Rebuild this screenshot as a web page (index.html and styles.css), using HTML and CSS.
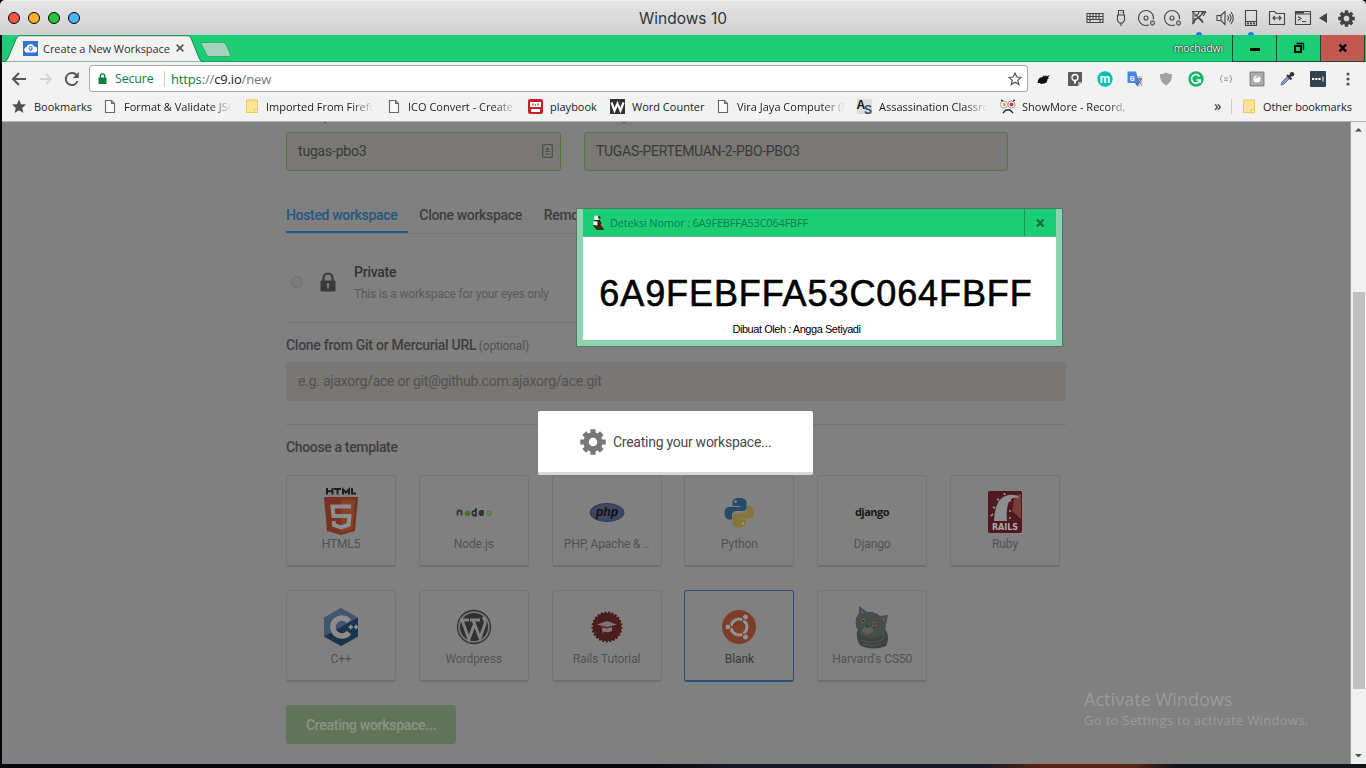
FILE: index.html
```html
<!DOCTYPE html>
<html lang="en">
<head>
<meta charset="utf-8">
<title>Windows 10</title>
<link rel="stylesheet" href="styles.css">
</head>
<body>
<header class="mac">
  <div class="lights"><i class="red"></i><i class="amber"></i><i class="green"></i><i class="blue"></i></div>
  <div class="mac-title">Windows 10</div>
  <div class="mac-icons">
    <svg viewBox="0 0 20 20"><path d="M2 5.500h16v9H2zM2 8.500h16M2 11.500h16M5 5.500v6M8 5.500v6M11 5.500v6M14 5.500v6M5 12v2.500M15 12v2.500"/></svg>
    <svg viewBox="0 0 20 20"><path d="M7.500 7V2.500h5V7M6.500 7h7v5.500l-2 2.500h-3l-2-2.500zM10 15v3M9 4.500h.5M11 4.500h.5"/></svg>
    <svg viewBox="0 0 20 20"><circle cx="9" cy="10" r="7.500"/><circle cx="9" cy="10" r="2"/><circle cx="15.500" cy="15" r="3.200" class="badge"/><path class="wx" d="M14.200 13.700l2.600 2.600m0-2.600l-2.600 2.600"/></svg>
    <svg viewBox="0 0 20 20"><circle cx="9" cy="10" r="7.500"/><circle cx="9" cy="10" r="2"/><circle cx="15.500" cy="15" r="3.200" class="badge"/><path class="wx" d="M14.200 13.700l2.600 2.600m0-2.600l-2.600 2.600"/></svg>
    <svg viewBox="0 0 20 20"><path d="M3 3.500l14 0M4 3v13M4 4l10 11M4 14L16 3.500M5 8q4 0 5-4M4.500 11q7 0 9-7M9 10q3 0 5 4M3 16l3-2M17 4l-3 4"/></svg>
    <svg viewBox="0 0 20 20"><path d="M2 7.500h4l4-4v13l-4-4H2zM6 7.500v5M12.500 7.500q2 2.500 0 5M14.500 6q3 4 0 8M16 4q4.500 6 0 12"/></svg>
    <svg viewBox="0 0 20 20"><path d="M4.500 2.500h11v15h-11z"/><path d="M4.500 13.500h11"/><path d="M6 15.500h8" stroke-width="2" stroke-dasharray="2 1"/></svg>
    <svg viewBox="0 0 20 20"><path d="M2.500 3.500h5l2 2h8v11h-15zM6 10h8M8 8l-2 2 2 2M12 8l2 2-2 2"/></svg>
    <svg viewBox="0 0 20 20"><path d="M2.500 3.500h15v13h-15zM3 6h14M5 8.500l3 2-3 2M9 13.500h4"/><path d="M3 4.500h8" stroke-width="2"/></svg>
    <svg class="tri" viewBox="0 0 16 20"><path class="f" d="M12 5v10L4 10z"/></svg>
    <svg class="gear-s" viewBox="0 0 26 26"><use href="#gear"/></svg>
  </div>
  <b class="dot d1"></b><b class="dot d2"></b>
</header>

<svg width="0" height="0" class="defs"><defs>
  <g id="gear"><circle cx="13" cy="13" r="7" fill="none" stroke="currentColor" stroke-width="5.400"/><path d="M13 .3v5M13 20.700v5M.3 13h5M20.700 13h5M4.200 4.200l3.600 3.600M18.200 18.200l3.600 3.600M21.800 4.200l-3.600 3.600M7.800 18.200l-3.600 3.600" fill="none" stroke="currentColor" stroke-width="5.200"/></g>
  <g id="doc"><path d="M1.500 1.500h6l3 3v9h-9zM7.500 1.500v3h3" fill="#f8f8f8" stroke="#666" stroke-width="1.100"/></g>
  <g id="folder"><path d="M.5 1h11v10.500h-3V13.500h-8z" fill="#ffe391" stroke="#e9c85e"/><path d="M8.500 13.500v-3h3v3z" fill="#fff0b8" stroke="#e9c85e"/></g>
</defs></svg>

<main class="win">
  <div class="tabstrip">
    <svg class="tab-shape" viewBox="0 0 240 27"><path d="M0 27C4 27 6 25.500 7 23L15.500 3Q16.500.7 19 .7H187Q189 .7 190 3L198.500 24Q199.500 27 203 27z" fill="#f2f2f2" stroke="#0b8a4a" stroke-width="1"/><path d="M201 7.500h21q2 0 3 2l4.500 10q.7 2-2 2h-19q-2 0-3-2l-5-10q-.7-2 .5-2z" fill="#a5d0b9" stroke="#2ba266" stroke-width=".8"/></svg>
    <div class="tab">
      <svg width="15" height="15" viewBox="0 0 15 15"><path fill="#2f74d0" d="M0 0h15v15H0z"/><path d="M3.500 11.500a2.800 2.800 0 010-5.500A4 4 0 0111 5.500a3 3 0 01.5 6z" fill="#fff"/><circle cx="7.600" cy="7" r="1.500" fill="none" stroke="#2f8cdb" stroke-width="1.100"/><path d="M9 7q0 2.500-2.500 3" fill="none" stroke="#2f8cdb" stroke-width="1.100"/></svg>
      <span class="tab-name">Create a New Workspace</span>
      <svg class="tab-x" width="8" height="8" viewBox="0 0 8 8"><path d="M.7.7l6.600 6.600M7.300.7L.7 7.300" stroke="#555" stroke-width="1.700"/></svg>
    </div>
    <div class="user">mochadwi</div>
    <div class="wbtn"><svg width="14" height="14" viewBox="0 0 14 14"><path d="M2 8.500h10" stroke="#000" stroke-width="3"/></svg></div>
    <div class="wbtn"><svg width="14" height="14" viewBox="0 0 14 14"><path d="M3 5h6v6H3z" stroke="#000" stroke-width="2" fill="none"/><path d="M4.500 2.500H11.500V9" stroke="#000" fill="none" stroke-width="1.300"/></svg></div>
    <div class="wbtn close"><svg width="14" height="14" viewBox="0 0 14 14"><path d="M3.500 3.500l6.500 7M10 3.500L3.500 10.500" stroke="#000" stroke-width="2.500"/></svg></div>
  </div>

  <div class="toolbar">
    <svg width="16" height="16" viewBox="0 0 16 16"><path d="M15 8H3M8 2L2 8l6 6" fill="none" stroke="#555" stroke-width="2"/></svg>
    <svg width="16" height="16" viewBox="0 0 16 16"><path d="M2 8h11M8 3l5 5-5 5" fill="none" stroke="#d4d4d4" stroke-width="1.800"/></svg>
    <svg width="16" height="16" viewBox="0 0 16 16"><path d="M13.500 10A6 6 0 118 2a6 6 0 014.500 2" fill="none" stroke="#555" stroke-width="2"/><path d="M14.800 1v6h-6z" fill="#555"/></svg>
    <div class="omni">
      <svg width="9" height="12" viewBox="0 0 9 12"><path fill="#0b8043" d="M.5 4.500h8v6.500h-8z"/><path d="M2.300 5V3a2.200 2.200 0 014.400 0v2" fill="none" stroke="#0b8043" stroke-width="1.300"/></svg>
      <span class="secure">Secure</span><i class="osep"></i>
      <span class="url"><em>https</em><s>://</s>c9.io<s>/new</s></span>
      <svg class="star" width="14" height="14" viewBox="0 0 14 14"><path d="M7 1l1.800 4 4.200.4-3.200 2.800 1 4.300L7 10.300l-3.800 2.200 1-4.300L1 5.400 5.200 5z" fill="none" stroke="#555" stroke-width="1.200"/></svg>
    </div>
    <div class="exts">
      <svg viewBox="0 0 16 16"><path d="M1.500 12q.5-6 5-6l1.500-2 .5 1.500 2-1.500v1.500L14 4l-2 2.500 1 1-1.500.5q0 4-3.500 4.500L5 13l-1-1z" fill="#111"/></svg>
      <svg viewBox="0 0 16 16"><path fill="#5d5d5d" d="M1 1h14v10l-4 4H1z"/><path d="M15 11h-4v4z" fill="#bbb"/><circle cx="8" cy="6.500" r="3" stroke="#fff" stroke-width="1.300" fill="none"/><path d="M7 9.500h2v3H7z" fill="#fff"/></svg>
      <svg viewBox="0 0 16 16"><circle cx="8" cy="8" r="7.700" fill="#00bfb5"/><text x="8" y="11.500" class="ic-m">m</text></svg>
      <svg viewBox="0 0 16 16"><path fill="#c8d0d8" d="M7 5h8.500v10.500H10z"/><path d="M.5.500H9L12 12H.5z" fill="#4a86e8"/><path d="M12 12l-4 0 2.500 3.500z" fill="#3367d6"/><text x="5.200" y="9.500" class="ic-g">G</text><path d="M10 8h5M12.500 7v1M14 8q-1 4-4 5M11 9q1 2 3.500 4" fill="none" stroke="#666"/></svg>
      <svg viewBox="0 0 16 16"><path d="M8 1.500q3 2 6 1.500 .5 8-6 11.500Q1.500 11 2 3q3 .5 6-1.500z" fill="#a2a2a2"/></svg>
      <svg viewBox="0 0 16 16"><circle cx="8" cy="8" r="7.700" fill="#17b66b"/><path d="M11.500 5.500A4.300 4.300 0 1012 9H8.500M12.300 9v3" fill="none" stroke="#fff" stroke-width="1.500"/></svg>
      <svg viewBox="0 0 16 16"><path d="M4.500 4.500Q2.500 4.500 3 7L2 8l1 1q-.5 2.500 1.500 2.500M11.500 4.500q2 0 1.500 2.500l1 1-1 1q.5 2.500-1.500 2.500M6 7h4M6 9.300h4" stroke="#999" fill="none"/></svg>
      <svg viewBox="0 0 16 16"><rect x=".5" y=".5" width="15" height="15" rx="1" fill="#8d8d8d"/><path fill="#aaa" d="M2 2h12v12H2z"/><circle cx="8" cy="8" r="3.600" fill="#fff"/><path d="M5 8l4-4 1 2z" fill="#aaa"/></svg>
      <svg viewBox="0 0 16 16"><path d="M2 14l1-3 6-6 2 2-6 6z" fill="#78a0e8" stroke="#667" stroke-width=".9"/><path d="M8 4l4.500 4.500M10 6l3-3" stroke="#333" stroke-width="2.200"/><circle cx="13" cy="3.200" r="2.200" fill="#333"/></svg>
      <svg viewBox="0 0 16 16"><rect width="16" height="16" rx="1" fill="#32434f"/><path d="M2 8h9" stroke="#fff" stroke-width="2.200" stroke-dasharray="2.200 1"/><path d="M13 5.500v5" stroke="#fff"/></svg>
      <svg viewBox="0 0 16 16"><g fill="#555"><circle cx="8" cy="3" r="1.600"/><circle cx="8" cy="8" r="1.600"/><circle cx="8" cy="13" r="1.600"/></g></svg>
    </div>
  </div>

  <nav class="marks">
    <a><svg class="w22" viewBox="0 0 22 15"><path d="M7 .5l2 4.700 5 .4-3.800 3.300 1.200 5L7 11.200 2.600 13.900l1.200-5L0 5.600l5-.4z" fill="#4d4d4d"/></svg><span>Bookmarks</span></a>
    <a class="fade"><svg class="w20" viewBox="0 0 20 15"><use href="#doc"/></svg><span>Format &amp; Validate JSO</span></a>
    <a class="fade"><svg class="w20" viewBox="0 0 20 15"><use href="#folder"/></svg><span>Imported From Firefox</span></a>
    <a class="fade"><svg class="w20" viewBox="0 0 20 15"><use href="#doc"/></svg><span>ICO Convert - Create</span></a>
    <a><svg class="w22" viewBox="0 0 22 15"><rect width="15" height="15" rx="2" fill="#c42026"/><path fill="#fff" d="M2 3h11v5H2zM3 10h9v3H3z"/><path d="M5 4.500v2M10 4.500v2M7 6h1" stroke="#c42026" stroke-width="1.300"/></svg><span>playbook</span></a>
    <a><svg class="w22" viewBox="0 0 22 15"><path fill="#333" d="M0 0h15v15H0z"/><path d="M1.500 3.500l3 8 3-7 3 7 3-8" fill="none" stroke="#fff" stroke-width="2.200"/></svg><span>Word Counter</span></a>
    <a class="fade"><svg class="w20" viewBox="0 0 20 15"><use href="#doc"/></svg><span>Vira Jaya Computer (H</span></a>
    <a class="fade"><svg class="w22 as" viewBox="0 0 22 15"><path fill="#ddd" d="M0 0h15v15H0z"/><text x="-.5" y="9.500">A</text><text x="7" y="15" class="as-s">S</text></svg><span>Assassination Classroo</span></a>
    <a class="fade"><svg class="w22" viewBox="0 0 22 15"><circle cx="4" cy="5.500" r="3.500" fill="#fff" stroke="#999"/><circle cx="11.500" cy="5.500" r="3.500" fill="#fff" stroke="#999"/><circle cx="4.300" cy="5.500" r="1.700" fill="#f29430"/><circle cx="11.500" cy="5.500" r="2" fill="#e33"/><path d="M3 14l3-3h4l3 3M1 1l2 1M15 1l-2 1" fill="none" stroke="#222" stroke-width="1.300"/></svg><span>ShowMore - Record, e</span></a>
    <a class="more">»</a>
    <a class="other"><svg class="w20" viewBox="0 0 20 15"><use href="#folder"/></svg><span>Other bookmarks</span></a>
  </nav>

  <div class="view">
    <div class="page">
      <div class="inputs">
        <div class="field f1"><span>tugas-pbo3</span><svg width="11" height="14" viewBox="0 0 11 14"><rect x=".7" y=".7" width="9.600" height="12.600" rx="1" fill="none" stroke="#505050" stroke-width="1.300"/><circle cx="5.500" cy="5" r="1.300" fill="#505050"/><path d="M3 7.500h5M3 10h5" stroke="#505050"/></svg></div>
        <div class="field f2"><span>TUGAS-PERTEMUAN-2-PBO-PBO3</span></div>
      </div>
      <div class="tabs"><span class="on">Hosted workspace</span><span>Clone workspace</span><span>Remo</span></div>
      <div class="private">
        <i class="radio"></i>
        <svg width="16" height="20" viewBox="0 0 16 20"><path d="M3.500 9V6a4.500 4.500 0 019 0v3" fill="none" stroke="#383838" stroke-width="2.200"/><rect x=".5" y="8.500" width="15" height="11" rx="1" fill="#383838"/><circle cx="8" cy="12.500" r="1.600" fill="#777"/><path d="M7.300 13h1.400l.5 3.500H6.800z" fill="#777"/></svg>
        <div><h4>Private</h4><p>This is a workspace for your eyes only</p></div>
      </div>
      <div class="clone"><b>Clone from Git or Mercurial URL</b> <small>(optional)</small></div>
      <div class="field git"><span>e.g. ajaxorg/ace or git@github.com:ajaxorg/ace.git</span></div>
      <h3>Choose a template</h3>
      <div class="cards">
        <div class="card"><svg width="36" height="48" viewBox="0 0 36 48"><g fill="none" stroke="#1c1c1c" stroke-width="2"><path d="M4 1v6.500M9.500 1v6.500M4 4.200h5.500M11 2h7M14.500 2v5.500M20 7.500V2.500l3 3 3-3v5M29 1v5.500h4"/></g><path d="M1 10h34l-3 34-14 4-14-4z" fill="#783122"/><path d="M18 12.500h14.200l-2.600 29.500L18 45.300z" fill="#864224"/><path d="M28 19.500H9.500l1 9.500h16l-1 9-7.500 2.500L11 38l-.4-4" fill="none" stroke="#8e8e8e" stroke-width="4"/></svg><span>HTML5</span></div>
        <div class="card"><svg width="36" height="48" viewBox="0 0 36 48"><g fill="none" stroke="#333" stroke-width="1.800"><path d="M1.500 28.500v-4q2-2 4 0v4M20 21v7.500h-2.500q-2.500-2.500 0-4.500H20M27.500 28h-3q-2-2 0-4h2.500v2h-3"/></g><circle cx="11.500" cy="26.200" r="2.800" fill="#4c7220"/><circle cx="33" cy="26.200" r="2.800" fill="#577b48"/><path d="M31.500 26h3" stroke="#7c8b75"/></svg><span>Node.js</span></div>
        <div class="card"><svg width="36" height="48" viewBox="0 0 36 48"><ellipse cx="18" cy="25.500" rx="17" ry="9" fill="#3e4662" stroke="#30384e"/><text x="18" y="28.500" class="ic-php">php</text></svg><span>PHP, Apache &amp; ..</span></div>
        <div class="card"><svg width="36" height="48" viewBox="0 0 36 48"><path d="M18 11c-5 0-6.500 2-6.500 4.500V19H19v1H8c-3 0-4.500 3-4.500 6s1.500 6.500 4.500 6.500h3V28c0-2.500 2-4 4-4h7c2 0 3.500-1.500 3.500-3.500v-5C25.500 12.500 23 11 18 11z" fill="#264a68"/><path d="M18.500 40.500c5 0 6.500-2 6.500-4.500v-3.500h-7.500v-1h11c3 0 4.500-3 4.500-6S31.500 19 28.500 19h-2.500v3.500c0 2.500-2 4-4 4h-7c-2 0-3.500 1.500-3.500 3.500v5c0 3.500 2.500 5.500 7 5.500z" fill="#87743a"/><circle cx="14.700" cy="14.500" r="1.300" fill="#8a8f94"/><circle cx="22" cy="36.500" r="1.300" fill="#a09878"/></svg><span>Python</span></div>
        <div class="card"><svg width="36" height="48" viewBox="0 0 36 48"><text x="18" y="29" class="ic-dj">django</text></svg><span>Django</span></div>
        <div class="card"><svg width="36" height="48" viewBox="0 0 36 48"><rect x="1" y="4" width="34" height="42" rx="2" fill="#501820"/><path d="M28 8l6-1v25l-9-8z" fill="#763e36"/><path d="M7 34q1-28 20-26 5 .5 5 3-8-2-11 6-2 8-1 17z" fill="#8d8d8d"/><path d="M4 29l2-2M6 20l2 1M10 12l2 1M17 6l1 2M24 14l-2-1M22 24h2M22 31h2" stroke="#999" stroke-width="1.600"/><text x="18" y="43" class="ic-rails">RAILS</text></svg><span>Ruby</span></div>
        <div class="card"><svg width="36" height="48" viewBox="0 0 36 48"><path d="M18 6l17 9.500v19L18 44 1 34.500v-19z" fill="#40556f"/><path d="M35 15.500v19L18 44 1 34.500 18 25z" fill="#1b3449"/><path d="M26 19.500a9 9 0 100 11" fill="none" stroke="#8c8c8c" stroke-width="5.500"/><path d="M25.500 25h4.500M27.700 22.800v4.500M31 25h4M33 22.800v4.500" stroke="#999" stroke-width="1.500"/></svg><span>C++</span></div>
        <div class="card"><svg width="36" height="48" viewBox="0 0 36 48"><circle cx="18" cy="25" r="16.500" fill="#777" stroke="#333" stroke-width="1.300"/><circle cx="18" cy="25" r="14" fill="#303030"/><path d="M4 18h9M14 18h10M6 18l7 19 5-14M17 18l7 18 5-14q1-4-2-7" fill="none" stroke="#818181" stroke-width="3"/></svg><span>Wordpress</span></div>
        <div class="card"><svg width="36" height="48" viewBox="0 0 36 48"><circle cx="18" cy="25" r="14" fill="#4a1c1e" stroke="#4a1c1e" stroke-width="3" stroke-dasharray="2 1.500"/><circle cx="18" cy="25" r="14" fill="#4a1c1e"/><path d="M8 22.500l10-3.500 10 3.500-10 2.500zM13 25v4q5 2.500 10 0v-4l-5 1.500zM12.500 24l1 1v7h1" fill="#807477"/></svg><span>Rails Tutorial</span></div>
        <div class="card sel"><svg width="36" height="48" viewBox="0 0 36 48"><circle cx="18" cy="25" r="17" fill="#7c3e28"/><circle cx="18" cy="25" r="8" fill="none" stroke="#929292" stroke-width="3.200"/><path d="M18 25H5M18 25l6-10.500M18 25l6 10.500" stroke="#7c3e28" stroke-width="1.300"/><g fill="#929292" stroke="#7c3e28"><circle cx="7" cy="25" r="3"/><circle cx="24.500" cy="15" r="3"/><circle cx="24.500" cy="35" r="3"/></g><circle cx="18" cy="25" r="6" fill="#7c3e28"/></svg><span>Blank</span></div>
        <div class="card"><svg width="36" height="48" viewBox="0 0 36 48"><path d="M3 29q-1 10 4 15 12 5 25 0 4-8 0-16z" fill="#3f423f"/><path d="M5 4l8 6q7-1 13 4l8-1-2 9q0 8-5 12-10 5-20-1-7-8-5-17 2-3 3-5z" fill="#484c4a"/><path d="M6.500 7l1 6 3-3zM31.500 15l-5 1 4 4z" fill="#5f5a58"/><path d="M8 38q9 5 20 0M9 42q9 3 18 0M30 30q1 5-2 8" fill="none" stroke="#565a57" stroke-width="1"/><path d="M13 24q-5 1-5 5 4 6 11 1 1-5-6-6z" fill="#5c605e"/><circle cx="9" cy="19" r="1.900" fill="#7d6a3c"/><circle cx="20" cy="22" r="1.900" fill="#7d6a3c"/><circle cx="9" cy="19" r=".9" fill="#1c1c1c"/><circle cx="20" cy="22" r=".9" fill="#1c1c1c"/><path d="M12 23.500l3 .8-2 1.700z" fill="#2c2e2d"/><path d="M9 29q3 1.500 5 1l-2.500 3z" fill="#86474a"/></svg><span>Harvard's CS50</span></div>
      </div>
      <div class="create">Creating workspace...</div>
    </div>
    <div class="label-tail t1"></div><div class="label-tail t2"></div>
    <div class="watermark"><div>Activate Windows</div><p>Go to Settings to activate Windows.</p></div>
    <div class="scroll"><svg width="9" height="6" viewBox="0 0 9 6"><path d="M4.500 1L8 4.500H1z" fill="#505050"/></svg><i></i><svg width="9" height="6" viewBox="0 0 9 6"><path d="M1 1h7L4.500 4.500z" fill="#505050"/></svg></div>
    <div class="toast"><svg width="26" height="26" viewBox="0 0 26 26"><use href="#gear"/></svg><span>Creating your workspace...</span></div>
    <section class="dialog">
      <div class="dtitle"><svg width="14" height="16" viewBox="0 0 14 16"><circle cx="5.500" cy="3" r="2.500" fill="#eee"/><path d="M7 .5q2 0 3 3L7.500 4z" fill="#333"/><path d="M3 5h6l2 5-4 3-5-2z" fill="#2b2420"/><path d="M2.500 6l4 .5v4l-4.500-.5z" fill="#eee"/><path d="M3 12l8-2 2 5H6z" fill="#3b2b20"/><path d="M10 9l2 3" stroke="#e8b030"/></svg><span>Deteksi Nomor : 6A9FEBFFA53C064FBFF</span><div class="dx"><svg width="9" height="8" viewBox="0 0 9 8"><path d="M1 .5l6.500 7M7.500.5L1 7.500" stroke="#0c7040" stroke-width="2.200"/></svg></div></div>
      <div class="dbody"><div class="code">6A9FEBFFA53C064FBFF</div><div class="by">Dibuat Oleh : Angga Setiyadi</div></div>
    </section>
  </div>
</main>
<footer class="desk"></footer>
</body>
</html>
```
FILE: styles.css
```css
* { box-sizing: border-box; margin: 0; padding: 0; }
body { width: 1366px; height: 768px; overflow: hidden; background: #050508; display: flex; flex-direction: column; font-family: "Roboto", sans-serif; }
i, em, s { font-style: normal; text-decoration: none; }
.defs { position: absolute; }

/* Host window title bar */
.mac { height: 35px; flex: none; position: relative; display: grid; grid-template-columns: 1fr auto 1fr; align-items: center; background: linear-gradient(#f5f5f5, #e5e5e5 4%, #d0d0d0); border-radius: 5px 5px 0 0; }
.lights { display: flex; gap: 8px; padding-left: 8px; }
.lights i { width: 12px; height: 12px; border-radius: 50%; border: 1px solid; }
.red { background: #ff5349; border-color: #e2463f; }
.amber { background: #ffb32c; border-color: #de9b22; }
.green { background: #26c63c; border-color: #1ba82e; }
.blue { background: #4bb5f5; border-color: #3b9edc; }
.mac-title { font: 15.5px "Inter", sans-serif; color: #333; padding-top: 2px; }
.mac-icons { display: flex; align-items: center; justify-content: flex-end; padding-right: 10px; color: #444; }
.mac-icons svg { width: 20px; height: 20px; margin: 1px 3px 0; fill: none; stroke: #444; stroke-width: 1.1; }
.mac-icons svg.tri { width: 16px; margin: 0 0 0 -1px; }
.mac-icons svg.gear-s { width: 17px; height: 17px; margin-left: 7px; margin-right: 1px; }
.mac-icons .f { fill: #444; stroke: none; }
.mac-icons .badge { fill: #666; stroke: #ddd; }
.mac-icons .wx { stroke: #eee; stroke-width: .9; }
.dot { position: absolute; width: 6px; height: 3px; bottom: 0; border-radius: 3px 3px 0 0; background: #167efb; }
.d1 { left: 1196px; }
.d2 { left: 1248px; }

/* Browser chrome */
.win { flex: 1; margin-left: 2px; display: flex; flex-direction: column; background: #f2f2f2; min-height: 0; }
.tabstrip { height: 27px; background: #1bce76; display: flex; position: relative; border-bottom: 1px solid #12a55c; padding-right: 1px; }
.tab-shape { position: absolute; left: -1px; top: 0; width: 240px; height: 27px; }
.tab { position: relative; display: flex; align-items: center; padding-left: 21px; flex: 1; font: 11px "Open Sans", sans-serif; color: #333; }
.tab-name { width: 126px; margin: 0 7px 0 5px; padding-top: 1px; white-space: nowrap; letter-spacing: -.05px; }
.user { font: 10.5px "Open Sans", sans-serif; color: #fff; text-shadow: 0 0 2px #000, 0 0 1px #000; line-height: 26px; margin-right: 9px; letter-spacing: -.15px; }
.wbtn { width: 44px; height: 27px; border-left: 1px solid #1b4b34; border-bottom: 1px solid #1b4b34; display: grid; place-items: center; position: relative; }
.close { background: #c2594e; width: 45px; border-right: 1px solid #1b4b34; }
.toolbar { height: 32px; display: flex; align-items: center; padding: 1px 0 0 9px; }
.toolbar > svg { margin-right: 10.5px; flex: none; }
.toolbar > svg:nth-of-type(3) { margin-right: 9px; }
.omni { width: 939px; height: 27px; flex: none; border: 1px solid #a9a9a9; border-radius: 3px; background: #fff; display: flex; align-items: center; padding: 0 5px 0 8px; font: 13px "Open Sans", sans-serif; color: #222; }
.secure { color: #0b8043; margin-left: 8px; width: 39px; font-size: 12.5px; letter-spacing: -.2px; }
.osep { width: 1px; height: 16px; background: #ccc; margin: 0 6px 0 10px; }
.url em { color: #0b8043; }
.url s { color: #777; }
.url { letter-spacing: -.15px; }
.star { margin-left: auto; }
.exts { display: flex; margin-left: 1px; }
.exts svg { width: 16px; height: 16px; margin: 0 7.2px; }
.ic-m { font: bold 12px "Roboto", sans-serif; fill: #fff; text-anchor: middle; }
.ic-g { font: bold 7px "Roboto", sans-serif; fill: #fff; text-anchor: middle; }
.marks { height: 27px; padding: 0 0 2px 10px; display: grid; align-items: center; grid-template-columns: 92px 142px 142px 140px 82px 107px 140px 143px 213px 18px 1fr; font: 11px "Open Sans", sans-serif; color: #222; white-space: nowrap; }
.marks a { display: flex; align-items: center; }
.marks svg { height: 15px; flex: none; overflow: visible; }
.w22 { width: 22px; }
.w20 { width: 20px; }
.fade span { width: 108px; overflow: hidden; -webkit-mask-image: linear-gradient(90deg, #000 80%, transparent); mask-image: linear-gradient(90deg, #000 80%, transparent); }
.as text { font: bold 12px "Liberation Sans", sans-serif; fill: #111; }
.as .as-s { fill: #26506e; }
.more { font-size: 15px; line-height: 15px; padding: 0 0 2px 1px; }
.other { border-left: 1px solid #ccc; padding-left: 11px; letter-spacing: -.1px; }

/* Web page seen through the modal dimmer */
.view { height: 643px; background: #808080; position: relative; border-top: 1px solid #b0b0b0; overflow: hidden; }
.page { width: 780px; margin-left: 284px; padding-top: 10px; display: flex; flex-direction: column; color: #3e3e3e; }
.inputs { display: flex; gap: 23px; }
.field { height: 39px; background: #797875; border-radius: 3px; display: flex; align-items: center; justify-content: space-between; padding: 0 7px 2px 12px; font-size: 14px; }
.f1, .f2 { border: 1px solid #4f7a3a; color: #3a3a3a; padding-left: 11px; }
.f1 { width: 275px; }
.f2 { width: 424px; }
.f1 span { letter-spacing: -.2px; }
.f2 span { letter-spacing: -.3px; }
.tabs { display: flex; height: 63px; align-items: flex-end; border-bottom: 1px solid #787878; font-weight: 500; font-size: 14px; }
.tabs span { height: 26px; padding-right: 11px; margin-right: 11px; white-space: nowrap; letter-spacing: -.33px; }
.tabs .on { color: #265780; border-bottom: 2px solid #245a89; }
.private { height: 89px; display: flex; align-items: center; padding: 8px 0 0 5px; border-bottom: 1px solid #737373; }
.radio { width: 12px; height: 12px; border-radius: 50%; border: 1px solid #707070; background: #7b7b7b; }
.private svg { margin: 0 18px 0 17px; }
h4 { font-size: 14px; font-weight: 500; color: #333; line-height: 18px; letter-spacing: -.25px; }
.private p { font-size: 12px; color: #5a5a5a; line-height: 16px; margin-top: 5px; letter-spacing: -.2px; }
.clone { height: 39px; padding-top: 13px; font-size: 14px; line-height: 18px; white-space: nowrap; }
.clone b { font-weight: 500; letter-spacing: -.27px; }
.clone small { font-size: 12px; color: #525252; letter-spacing: -.15px; margin-left: -1px; }
.git { color: #525252; background: #787775; }
.git span { letter-spacing: -.24px; }
h3 { margin-top: 23px; border-top: 1px solid #737373; padding-top: 13px; height: 51px; font-size: 14px; line-height: 18px; font-weight: 500; letter-spacing: -.35px; }
.cards { display: grid; grid-template-columns: repeat(6, 110px); column-gap: 22.8px; row-gap: 23px; }
.card { height: 92px; border: 1px solid #757575; border-bottom: 2px solid #6f6f6f; border-radius: 3px; display: flex; flex-direction: column; align-items: center; padding-top: 11px; font-size: 12px; color: #525252; line-height: 16px; white-space: nowrap; }
.card span { margin-top: 1px; letter-spacing: -.1px; }
.sel { border-color: #295178; }
.sel span { color: #383838; }
.ic-php { font: italic bold 12px "Liberation Sans", sans-serif; fill: #111; text-anchor: middle; }
.ic-dj { font: bold 11px "Open Sans", sans-serif; fill: #181818; text-anchor: middle; letter-spacing: -.5px; }
.ic-rails { font: bold 8px "DejaVu Sans", sans-serif; fill: #aaa; text-anchor: middle; }
.create { margin-top: 23px; width: 170px; height: 39px; border-radius: 3px; background: #61745a; color: #8a9285; font-size: 14px; font-weight: 500; letter-spacing: -.28px; display: grid; place-items: center; }
.label-tail { position: absolute; width: 2px; height: 1px; background: #505050; top: 0; }
.t1 { left: 322px; }
.t2 { left: 621px; }
.watermark { position: absolute; left: 1082px; top: 565px; font-family: "Open Sans", sans-serif; color: #9b9b9b; white-space: nowrap; }
.watermark div { font-size: 18.1px; line-height: 24px; }
.watermark p { font-size: 13px; line-height: 18px; letter-spacing: .33px; }
.scroll { position: absolute; left: 1348px; top: 0; width: 16px; height: 643px; background: #f0f0f0; display: flex; flex-direction: column; align-items: center; padding: 5px 0 6px; border-left: 1px solid #a0a0a0; }
.scroll i { width: 12px; height: 397px; margin: 159px 0 auto; background: #c1c1c1; }
.toast { position: absolute; left: 536px; top: 289px; width: 275px; height: 64px; background: #fff; border-bottom: 3px solid #d9d9d9; border-radius: 2px; display: flex; align-items: center; padding: 0 0 0 42px; gap: 7px; font-size: 14px; color: #4a4a4a; white-space: nowrap; letter-spacing: -.26px; }
.toast svg { color: #777; }

/* Floating desktop dialog */
.dialog { position: absolute; left: 574px; top: 86px; width: 487px; height: 139px; border: 1px solid #587565; background: #8dd5b1; padding: 0 6px 6px; display: flex; flex-direction: column; }
.dtitle { height: 28px; background: #1bce76; display: flex; align-items: center; padding-left: 8px; border-bottom: 1px solid #65c094; font: 11px "Open Sans", sans-serif; color: #0c8049; white-space: nowrap; }
.dtitle span { margin-left: 5px; letter-spacing: -.2px; }
.dx { margin-left: auto; width: 32px; height: 27px; border-left: 1px solid #15995a; display: grid; place-items: center; }
.dbody { flex: 1; background: #fff; color: #000; text-align: center; white-space: nowrap; }
.code { font: 36px/44px "Liberation Sans", sans-serif; margin-top: 35px; padding-right: 7px; letter-spacing: .9px; -webkit-text-stroke: .6px #000; }
.by { font: 11px/14px "Liberation Sans", sans-serif; margin-top: 6px; padding-right: 46px; letter-spacing: -.45px; }
.desk { height: 4px; flex: none; background: linear-gradient(90deg, #08070b 0 48%, #171827 53% 72%, #552313 76% 83%, #12141d 86%); }
```
